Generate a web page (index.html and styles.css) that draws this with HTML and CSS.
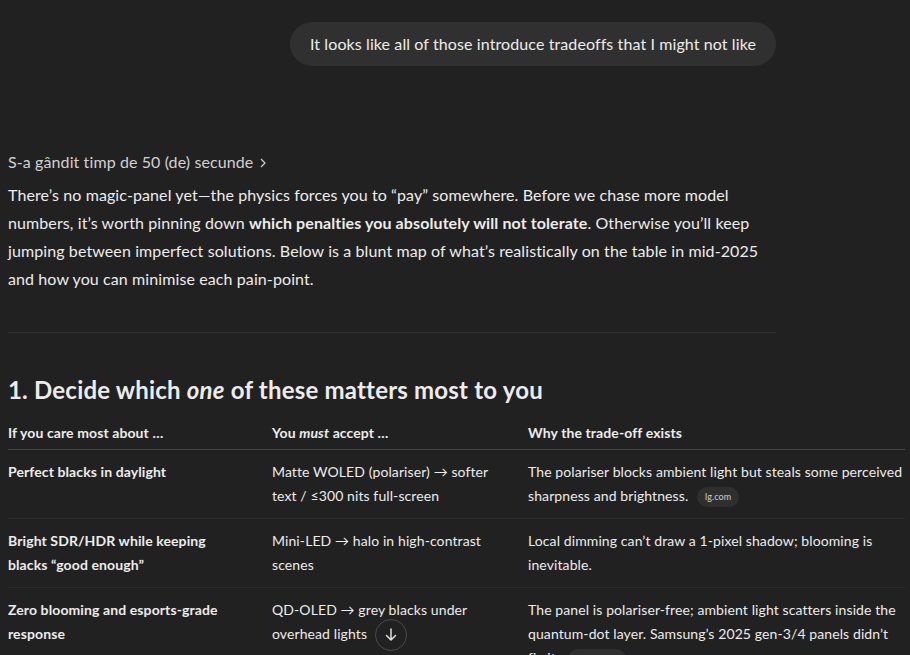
FILE: index.html
```html
<!DOCTYPE html>
<html lang="en">
<head>
    <meta charset="UTF-8">
    <meta name="viewport" content="width=device-width, initial-scale=1.0">
    <title>Chat</title>
    <link rel="stylesheet" href="styles.css">
</head>
<body>
    <div id="thread">
        <div class="user-row">
            <div class="bubble">It looks like all of those introduce tradeoffs that I might not like</div>
        </div>

        <div class="thought">
            S-a gândit timp de 50 (de) secunde
            <svg class="chevron" width="12" height="12" viewBox="0 0 12 12"><path d="M4 2l4 4-4 4" fill="none" stroke="currentColor" stroke-width="1.2"/></svg>
        </div>

        <p class="answer">There’s no magic-panel yet—the physics forces you to “pay” somewhere. Before we chase more model numbers, it’s worth pinning down <strong>which penalties you absolutely will not tolerate</strong>. Otherwise you’ll keep jumping between imperfect solutions. Below is a blunt map of what’s realistically on the table in mid-2025 and how you can minimise each pain-point.</p>

        <hr class="divider">

        <h2 class="section-title">1. Decide which <em>one</em> of these matters most to you</h2>

        <table class="tradeoffs">
            <thead>
                <tr>
                    <th class="col-care">If you care most about …</th>
                    <th class="col-accept">You <em>must</em> accept …</th>
                    <th class="col-why">Why the trade-off exists</th>
                </tr>
            </thead>
            <tbody>
                <tr>
                    <td><strong>Perfect blacks in daylight</strong></td>
                    <td>Matte WOLED (polariser) → softer text / ≤300 nits full-screen</td>
                    <td>The polariser blocks ambient light but steals some perceived sharpness and brightness. <span class="source">lg.com</span></td>
                </tr>
                <tr>
                    <td><strong>Bright SDR/HDR while keeping blacks “good enough”</strong></td>
                    <td>Mini-LED → halo in high-contrast scenes</td>
                    <td>Local dimming can’t draw a 1-pixel shadow; blooming is inevitable.</td>
                </tr>
                <tr>
                    <td><strong>Zero blooming and esports-grade response</strong></td>
                    <td>QD-OLED → grey blacks under overhead lights</td>
                    <td>The panel is polariser-free; ambient light scatters inside the quantum-dot layer. Samsung’s 2025 gen-3/4 panels didn’t fix it. <span class="source">rtings.com</span></td>
                </tr>
            </tbody>
        </table>

        <button class="scroll-down" aria-label="Scroll to bottom">
            <svg width="18" height="18" viewBox="0 0 18 18"><path d="M9 3v11M4.5 9.5L9 14l4.5-4.5" fill="none" stroke="currentColor" stroke-width="1.5" stroke-linecap="round" stroke-linejoin="round"/></svg>
        </button>
    </div>
</body>
</html>
```

FILE: styles.css
```css
body {
    margin: 0;
    background: #212121;
    color: #ececec;
    font-family: Lato, "Noto Sans", sans-serif;
    font-size: 16px;
    letter-spacing: 0.1px;
    height: 655px;
    overflow: hidden;
}

#thread {
    position: relative;
    width: 768px;
    margin-left: 8px;
    height: 655px;
}

.user-row {
    display: flex;
    justify-content: flex-end;
    padding-top: 22px;
}

.bubble {
    background: #303030;
    border-radius: 22px;
    padding: 10px 20px;
    line-height: 24px;
}

.thought {
    margin-top: 84px;
    line-height: 24px;
    color: #d2d2d2;
    display: flex;
    align-items: center;
    gap: 4px;
}

.chevron {
    margin-top: 1px;
}

.answer {
    margin: 7px 0 0;
    line-height: 28px;
}

.answer strong {
    font-weight: 700;
}

.divider {
    border: none;
    border-top: 1px solid #2f2f2f;
    margin: 39px 0 0;
}

.section-title {
    margin: 41px 0 0;
    font-size: 24px;
    line-height: 32px;
    font-weight: 700;
    letter-spacing: 0.2px;
}

.section-title em {
    font-weight: 700;
}

.tradeoffs {
    width: 897px;
    table-layout: fixed;
    border-collapse: collapse;
    margin-top: 15px;
    font-size: 14px;
    line-height: 24px;
}

.tradeoffs th {
    text-align: left;
    font-weight: 700;
    padding: 0 0 4px 0;
    border-bottom: 1px solid #444;
}

.tradeoffs td {
    vertical-align: top;
    padding: 10px 0 10px 0;
    border-bottom: 1px solid #2c2c2c;
}

/* content widths; padding-right makes up the rest of the column */
.col-care { width: 220px; }
.col-accept { width: 220px; }

.tradeoffs td:first-child,
.tradeoffs th:first-child {
    padding-right: 44px;
}

.tradeoffs td:nth-child(2),
.tradeoffs th:nth-child(2) {
    padding-right: 36px;
}

.source {
    display: inline-block;
    background: #2f2f2f;
    color: #cfcfcf;
    font-size: 9px;
    line-height: 20px;
    padding: 0 8px;
    border-radius: 10px;
    margin-left: 5px;
    vertical-align: middle;
}

.scroll-down {
    position: absolute;
    left: 367px;
    top: 619px;
    width: 32px;
    height: 32px;
    border-radius: 50%;
    border: 1px solid #4a4a4a;
    background: #212121;
    color: #e0e0e0;
    padding: 0;
    display: flex;
    align-items: center;
    justify-content: center;
}
```
